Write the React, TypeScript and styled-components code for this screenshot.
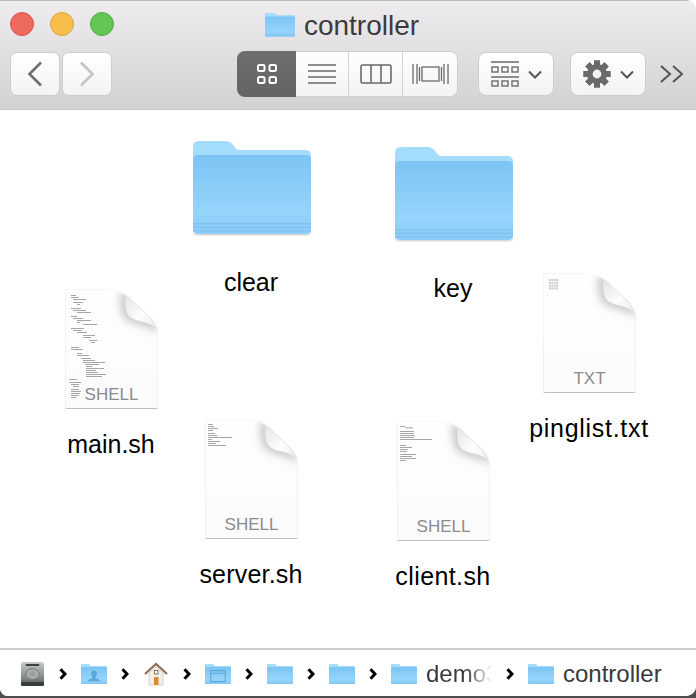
import styled, { createGlobalStyle } from 'styled-components'

const GlobalStyle = createGlobalStyle`
  html, body {
    margin: 0;
    padding: 0;
    background: #fff;
  }
  body {
    font-family: "Liberation Sans", Arial, sans-serif;
  }
`

type Glyph = 'user' | 'window'

function Folder({ width, glyph }: { width: number; glyph?: Glyph }) {
  return (
    <svg width={width} height={(width * 95) / 118} viewBox="0 0 118 95">
      <defs>
        <linearGradient id="folderFront" x1="0" y1="0" x2="0" y2="1">
          <stop offset="0" stopColor="#7cc4f4" />
          <stop offset="0.7" stopColor="#95d4fb" />
          <stop offset="1" stopColor="#8ccdf7" />
        </linearGradient>
        <filter id="folderShadow" x="-5%" y="-5%" width="110%" height="112%">
          <feDropShadow dx="0" dy="1" stdDeviation="1" floodColor="#000" floodOpacity="0.22" />
        </filter>
      </defs>
      <g filter="url(#folderShadow)">
        <path d="M0 6 Q0 0 6 0 H32 Q37 0 40 4 L43 8 Q44 9 47 9 H112 Q118 9 118 15 V40 H0 Z" fill="#a4dcfc" />
        <path d="M0 19 Q0 14 5 14 H113 Q118 14 118 19 V88 Q118 93 113 93 H5 Q0 93 0 88 Z" fill="url(#folderFront)" />
        <rect x="0" y="82" width="118" height="1.6" fill="#80c3f1" />
        <rect x="0" y="85.5" width="118" height="1.6" fill="#80c3f1" />
        <rect x="0" y="89" width="118" height="1.6" fill="#80c3f1" />
      </g>
      {glyph === 'user' && (
        <path d="M59 30 a13 15 0 0 1 13 15 c0 7 -4 11 -6 13 v4 l16 8 q4 2 4 8 H32 q0 -6 4 -8 l16 -8 v-4 c-2 -2 -6 -6 -6 -13 a13 15 0 0 1 13 -15 Z" fill="#5ca7de" />
      )}
      {glyph === 'window' && (
        <g fill="none" stroke="#5ca7de" strokeWidth="5">
          <rect x="26" y="30" width="66" height="50" rx="2" />
          <path d="M26 42 H92" />
        </g>
      )}
    </svg>
  )
}

type CodeLine = [number, number, number]

const mainLines: CodeLine[] = [
  [6, 6, 5], [8, 6, 8], [10, 8, 13], [13, 8, 10], [15, 12, 3], [19, 6, 10], [21, 8, 13], [23, 12, 14],
  [27, 6, 6], [29, 8, 10], [31, 12, 14], [33, 12, 3], [35, 18, 14], [39, 6, 13], [41, 8, 9], [43, 12, 10],
  [46, 18, 12], [48, 18, 8], [51, 24, 8], [53, 26, 4], [58, 6, 8], [60, 6, 12], [64, 12, 5], [66, 12, 12],
  [69, 16, 10], [71, 18, 12], [73, 18, 22], [75, 20, 14], [77, 21, 6], [79, 21, 18], [81, 21, 10], [83, 21, 12],
  [85, 21, 20], [87, 21, 16], [90, 4, 8], [93, 4, 12], [95, 6, 8], [97, 8, 6], [100, 6, 8], [102, 6, 10],
  [104, 6, 9], [106, 6, 8], [108, 6, 5],
]

const serverLines: CodeLine[] = [
  [5, 3, 5], [7, 3, 6], [9, 3, 10], [11, 3, 5], [14, 3, 7], [16, 3, 9], [18, 3, 24], [20, 3, 4],
  [22, 3, 12], [24, 3, 8], [26, 3, 18],
]

const clientLines: CodeLine[] = [
  [5, 3, 5], [6.5, 8, 8], [10, 3, 14], [12, 3, 14], [14, 3, 15], [16, 3, 14], [18, 3, 32], [24, 3, 6],
  [26, 3, 12], [28, 3, 8], [30, 3, 7], [33, 3, 16], [35, 3, 12], [37, 3, 16], [39, 3, 6],
]

const gridDots = [0, 1, 2, 3].flatMap(r => [0, 1, 2, 3].map(c => [6 + c * 2.4, 6 + r * 2.8]))

const BODY_PATH = 'M0.5 1 H42 C52 1 58 4 64 9 L84 28 C90 34 92.5 40 92.5 50 V119 H0.5 Z'

function Doc({ lines, dots }: { lines?: CodeLine[]; dots?: boolean }) {
  return (
    <svg width="93" height="120" viewBox="0 0 93 120">
      <defs>
        <linearGradient id="docFold" x1="0" y1="0" x2="1" y2="1">
          <stop offset="0" stopColor="#e4e4e4" />
          <stop offset="0.55" stopColor="#fdfdfd" />
          <stop offset="1" stopColor="#eeeeee" />
        </linearGradient>
        <linearGradient id="docBody" x1="0" y1="0" x2="0" y2="1">
          <stop offset="0" stopColor="#fefefe" />
          <stop offset="1" stopColor="#fbfbfb" />
        </linearGradient>
        <clipPath id="docClip">
          <path d={BODY_PATH} />
        </clipPath>
        <filter id="docShadow" x="-5%" y="-5%" width="110%" height="110%">
          <feDropShadow dx="0" dy="1" stdDeviation="1" floodColor="#000" floodOpacity="0.38" />
        </filter>
        <filter id="curlBlur" x="-40%" y="-40%" width="180%" height="180%">
          <feGaussianBlur stdDeviation="4" />
        </filter>
        <filter id="codeBlur">
          <feGaussianBlur stdDeviation="0.25" />
        </filter>
      </defs>
      <path d={BODY_PATH} fill="url(#docBody)" filter="url(#docShadow)" />
      <g clipPath="url(#docClip)">
        <path d="M55 3 C55 18 56 28 63 32 C72 37 84 36 93 44 V30 L64 3 Z" fill="#c8c8c8" filter="url(#curlBlur)" />
      </g>
      <path
        d="M60 7 C60 17 60 25 66 29 C73 33 84 33 91 39 C89 35 87 31 84 28 L64 9 C63 8 61.5 7.5 60 7 Z"
        fill="url(#docFold)"
        stroke="#d9d9d9"
        strokeWidth="0.4"
      />
      <g filter="url(#codeBlur)">
        {lines?.map(([y, x, w], i) => (
          <rect key={i} x={x} y={y} width={w} height="0.8" fill="#8f8f8f" />
        ))}
      </g>
      {dots && gridDots.map(([x, y], i) => (
        <rect key={i} x={x} y={y} width="1.8" height="2" fill="#cbcbcb" />
      ))}
    </svg>
  )
}

const folders = [
  { name: 'clear', x: 251, y: 141 },
  { name: 'key', x: 453, y: 147 },
]

const docs = [
  { name: 'main.sh', x: 111, y: 289, tag: 'SHELL', lines: mainLines },
  { name: 'server.sh', x: 251, y: 419, tag: 'SHELL', lines: serverLines, spacing: 0.2 },
  { name: 'client.sh', x: 443, y: 421, tag: 'SHELL', lines: clientLines, spacing: 0.4 },
  { name: 'pinglist.txt', x: 589, y: 273, tag: 'TXT', dots: true, spacing: 0.7 },
]

const Chevron = () => (
  <ChevronMark width="8" height="12" viewBox="0 0 8 12">
    <path d="M1.5 1.2 L6 6 L1.5 10.8" fill="none" stroke="#000" strokeWidth="3" />
  </ChevronMark>
)

const Gear = () => {
  const teeth = [0, 45, 90, 135, 180, 225, 270, 315]
  return (
    <svg width="28" height="28" viewBox="0 0 28 28">
      {teeth.map(a => (
        <rect key={a} x="11" y="0.5" width="6" height="27" fill="#6a6a6a" transform={`rotate(${a} 14 14)`} />
      ))}
      <circle cx="14" cy="14" r="10" fill="#6a6a6a" />
      <circle cx="14" cy="14" r="4.4" fill="#f1f0f1" />
    </svg>
  )
}

const Caret = () => (
  <svg width="14" height="9" viewBox="0 0 14 9">
    <path d="M1 1.5 L7 7.5 L13 1.5" fill="none" stroke="#555" strokeWidth="2" />
  </svg>
)

export default function App() {
  return (
    <Page>
      <GlobalStyle />
      <Finder>
        <Toolbar>
          <TitleRow>
            <Lights>
              <Light $color="#ee6a5f" $edge="#d9544a" />
              <Light $color="#f6bd4f" $edge="#dfa33b" />
              <Light $color="#62c654" $edge="#50ad43" />
            </Lights>
            <Title>
              <Folder width={30} />
              <TitleText>controller</TitleText>
            </Title>
          </TitleRow>
          <Controls>
            <NavGroup>
              <NavButton>
                <svg width="16" height="26" viewBox="0 0 16 26">
                  <path d="M14 1.5 L2.5 13 L14 24.5" fill="none" stroke="#6f6f6f" strokeWidth="2.6" />
                </svg>
              </NavButton>
              <NavButton>
                <svg width="16" height="26" viewBox="0 0 16 26">
                  <path d="M2 1.5 L13.5 13 L2 24.5" fill="none" stroke="#c4c4c4" strokeWidth="2.6" />
                </svg>
              </NavButton>
            </NavGroup>
            <ViewGroup>
              <ViewButton $active $width={59}>
                <svg width="20" height="20" viewBox="0 0 20 20" fill="none" stroke="#fff" strokeWidth="2">
                  <rect x="1" y="1" width="6.5" height="6" rx="1.5" />
                  <rect x="12.5" y="1" width="6.5" height="6" rx="1.5" />
                  <rect x="1" y="13" width="6.5" height="6" rx="1.5" />
                  <rect x="12.5" y="13" width="6.5" height="6" rx="1.5" />
                </svg>
              </ViewButton>
              <ViewButton $width={53}>
                <svg width="28" height="20" viewBox="0 0 28 20" stroke="#6a6a6a" strokeWidth="1.6">
                  <path d="M0 1 H28 M0 7 H28 M0 13 H28 M0 19 H28" />
                </svg>
              </ViewButton>
              <ViewButton $width={54}>
                <svg width="32" height="20" viewBox="0 0 32 20" fill="none" stroke="#6a6a6a" strokeWidth="1.6">
                  <rect x="1" y="1" width="30" height="18" rx="1.5" />
                  <path d="M11 1 V19 M21 1 V19" />
                </svg>
              </ViewButton>
              <ViewButton $width={55}>
                <svg width="37" height="22" viewBox="0 0 37 22" fill="none" stroke="#6a6a6a" strokeWidth="1.3">
                  <rect x="10" y="4" width="17" height="14" />
                  <path d="M1 1 V21 M5 1 V21 M7.5 4 V18 M36 1 V21 M32 1 V21 M29.5 4 V18" />
                </svg>
              </ViewButton>
            </ViewGroup>
            <MenuButton>
              <svg width="28" height="26" viewBox="0 0 28 26" fill="none" stroke="#6a6a6a">
                <path d="M0 1 H28 M0 16 H28" strokeWidth="1.6" />
                <g strokeWidth="1.4">
                  <rect x="1" y="6" width="6" height="5" />
                  <rect x="11" y="6" width="6" height="5" />
                  <rect x="21" y="6" width="6" height="5" />
                  <rect x="1" y="20" width="6" height="5" />
                  <rect x="11" y="20" width="6" height="5" />
                  <rect x="21" y="20" width="6" height="5" />
                </g>
              </svg>
              <Caret />
            </MenuButton>
            <MenuButton>
              <Gear />
              <Caret />
            </MenuButton>
            <More>
              <svg width="24" height="18" viewBox="0 0 24 18" fill="none" stroke="#555" strokeWidth="2">
                <path d="M1 1 L10 9 L1 17 M13 1 L22 9 L13 17" />
              </svg>
            </More>
          </Controls>
        </Toolbar>

        <Canvas>
          {folders.map(item => (
            <Item key={item.name} $x={item.x} $y={item.y}>
              <FolderBox>
                <Folder width={118} />
              </FolderBox>
              <Label>{item.name}</Label>
            </Item>
          ))}
          {docs.map(item => (
            <Item key={item.name} $x={item.x} $y={item.y}>
              <DocBox>
                <Doc lines={item.lines} dots={item.dots} />
                <Tag>{item.tag}</Tag>
              </DocBox>
              <Label $spacing={item.spacing}>{item.name}</Label>
            </Item>
          ))}
        </Canvas>

        <PathBar>
          <svg width="25" height="26" viewBox="0 0 26 26" preserveAspectRatio="none">
            <defs>
              <linearGradient id="diskBody" x1="0" y1="0" x2="0" y2="1">
                <stop offset="0" stopColor="#c6caca" />
                <stop offset="0.65" stopColor="#858989" />
                <stop offset="1" stopColor="#4a4e4e" />
              </linearGradient>
            </defs>
            <rect x="1" y="1" width="24" height="24" rx="3" fill="url(#diskBody)" />
            <rect x="6" y="3" width="14" height="2" fill="#3f4343" />
            <ellipse cx="13" cy="13" rx="7" ry="5.5" fill="#a6aaaa" stroke="#767a7a" />
            <ellipse cx="13" cy="13" rx="2.5" ry="2" fill="#979b9b" />
            <rect x="1" y="21" width="24" height="4" rx="1.5" fill="#3a3d3d" />
          </svg>
          <Chevron />
          <Folder width={26} glyph="user" />
          <Chevron />
          <svg width="26" height="24" viewBox="-1 0 26 24">
            <path d="M5 11 V23 H19 V11 L12 5 Z" fill="#f2efe9" stroke="#bdb7ab" strokeWidth="0.6" />
            <path d="M1 12 L12 2 L23 12" fill="none" stroke="#8c6d55" strokeWidth="2.2" />
            <rect x="10" y="15" width="4.5" height="8" fill="#e08a2c" />
            <rect x="10.5" y="8.5" width="3.5" height="3.5" fill="#fff" stroke="#8c6d55" />
          </svg>
          <Chevron />
          <Folder width={26} glyph="window" />
          <Chevron />
          <Folder width={26} />
          <Chevron />
          <Folder width={26} />
          <Chevron />
          <Crumb>
            <Folder width={26} />
            <Faded>demo3</Faded>
          </Crumb>
          <Chevron />
          <Crumb>
            <Folder width={26} />
            <CrumbText>controller</CrumbText>
          </Crumb>
        </PathBar>
      </Finder>
    </Page>
  )
}

const Page = styled.div`
  width: 696px;
  height: 698px;
  overflow: hidden;
  background: linear-gradient(#fff 50%, #4f4f4f 50%);
`

const Finder = styled.div`
  height: 696px;
  display: flex;
  flex-direction: column;
  background: #fff;
  border-radius: 0 10px 10px 8px;
  overflow: hidden;
`

const Toolbar = styled.div`
  height: 110px;
  box-sizing: border-box;
  flex: none;
  display: flex;
  flex-direction: column;
  padding: 1px 0 0;
  border-top: 1px solid #bdbbbd;
  border-bottom: 1px solid #c9c7c9;
  background: linear-gradient(#eeecee, #d3d1d3);
`

const TitleRow = styled.div`
  position: relative;
  height: 49px;
  display: flex;
  align-items: center;
  justify-content: center;
`

const Lights = styled.div`
  position: absolute;
  left: 10px;
  top: 10px;
  display: flex;
  gap: 16px;
`

const Light = styled.span<{ $color: string; $edge: string }>`
  width: 24px;
  height: 24px;
  box-sizing: border-box;
  border-radius: 50%;
  background: ${({ $color }) => $color};
  border: 1px solid ${({ $edge }) => $edge};
`

const Title = styled.div`
  display: flex;
  align-items: center;
  gap: 9px;
  margin: -3px 0 0 -12px;
`

const TitleText = styled.span`
  font-size: 28px;
  line-height: 30px;
  margin-top: 1px;
  color: #3d3a3c;
`

const Controls = styled.div`
  display: flex;
  align-items: center;
  padding-left: 10px;
`

const NavGroup = styled.div`
  display: flex;
  gap: 2px;
  margin-right: 125px;
`

const NavButton = styled.div`
  width: 50px;
  height: 44px;
  display: flex;
  align-items: center;
  justify-content: center;
  box-sizing: border-box;
  background: linear-gradient(#fff, #f4f3f4);
  border: 1px solid #cfcdcf;
  border-radius: 7px;
`

const ViewGroup = styled.div`
  display: flex;
  height: 46px;
  margin-right: 20px;
  border-radius: 8px;
  overflow: hidden;
  background: linear-gradient(#fff, #f4f3f4);
  box-shadow: inset 0 0 0 1px #cfcdcf;
`

const ViewButton = styled.div<{ $active?: boolean; $width: number }>`
  width: ${({ $width }) => $width}px;
  display: flex;
  align-items: center;
  justify-content: center;
  box-sizing: border-box;
  background: ${({ $active }) => ($active ? 'linear-gradient(#6e6e6e, #646464)' : 'transparent')};
  border-right: ${({ $active }) => ($active ? 'none' : '1px solid #d4d2d4')};
  &:last-child {
    border-right: none;
  }
`

const MenuButton = styled.div`
  width: 76px;
  height: 44px;
  display: flex;
  align-items: center;
  justify-content: center;
  gap: 9px;
  box-sizing: border-box;
  margin-right: 16px;
  background: linear-gradient(#fff, #f4f3f4);
  border: 1px solid #cfcdcf;
  border-radius: 8px;
`

const More = styled.div`
  display: flex;
  margin-left: -2px;
`

const Canvas = styled.div`
  flex: 1;
  background: #fff;
`

const Item = styled.div<{ $x: number; $y: number }>`
  position: absolute;
  left: ${({ $x }) => $x - 80}px;
  top: ${({ $y }) => $y}px;
  width: 160px;
  display: flex;
  flex-direction: column;
  align-items: center;
`

const FolderBox = styled.div`
  display: flex;
  padding-left: 2px;
  margin-bottom: 32px;
`

const DocBox = styled.div`
  position: relative;
  display: flex;
  margin-bottom: 21px;
`

const Tag = styled.span`
  position: absolute;
  left: 1px;
  right: 0;
  bottom: 4px;
  text-align: center;
  font-size: 17px;
  line-height: 20px;
  color: #8b8b8b;
`

const Label = styled.span<{ $spacing?: number }>`
  font-size: 25px;
  line-height: 28px;
  letter-spacing: ${({ $spacing }) => $spacing ?? 0}px;
  color: #000;
`

const PathBar = styled.div`
  height: 48px;
  box-sizing: border-box;
  flex: none;
  display: flex;
  align-items: center;
  gap: 14px;
  padding: 2px 0 0 20px;
  border-top: 2px solid #cdcdcd;
  background: #fff;
`

const ChevronMark = styled.svg`
  flex: none;
`

const Crumb = styled.div`
  display: flex;
  align-items: center;
  gap: 9px;
`

const CrumbText = styled.span`
  font-size: 24px;
  line-height: 28px;
  color: #3a3a3a;
`

const Faded = styled(CrumbText)`
  width: 66px;
  overflow: hidden;
  white-space: nowrap;
  mask-image: linear-gradient(90deg, #000 60%, transparent 100%);
`
